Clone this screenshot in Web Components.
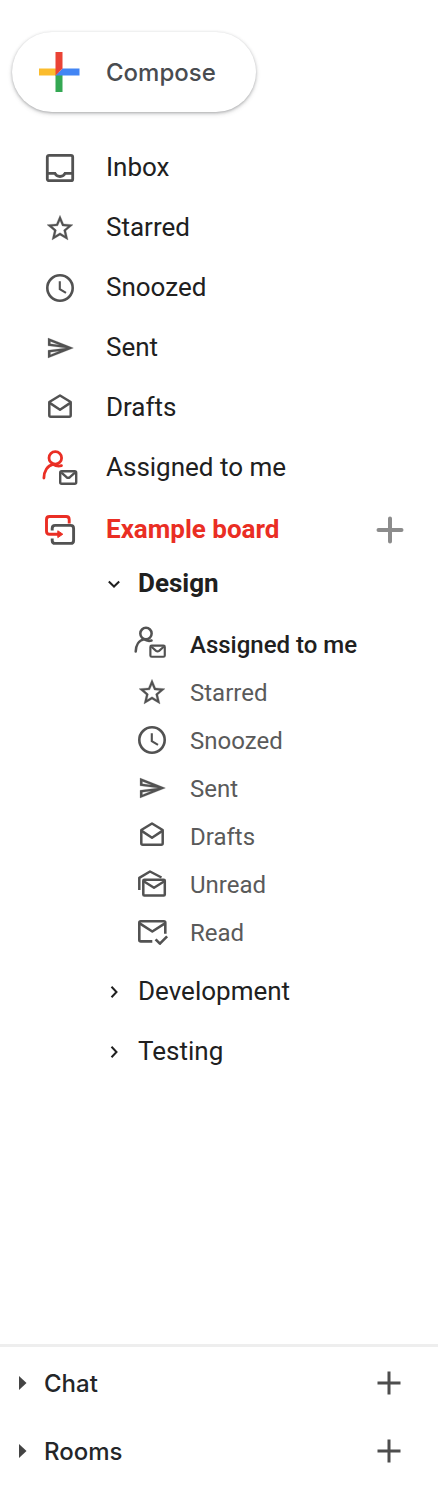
<!DOCTYPE html>
<html lang="en">
<head>
<meta charset="utf-8">
<meta name="viewport" content="width=device-width, initial-scale=1">
<title>Mail navigation</title>
<style>
  body {
    margin: 0;
    background: #fff;
    color: #202020;
    font-family: Roboto, "Liberation Sans", sans-serif;
    --accent: #ea2e24;
    --icon: #525252;
  }
</style>
</head>
<body>
<side-bar>
  <compose-button slot="compose">Compose</compose-button>

  <nav-item icon="inbox">Inbox</nav-item>
  <nav-item icon="star">Starred</nav-item>
  <nav-item icon="clock">Snoozed</nav-item>
  <nav-item icon="send">Sent</nav-item>
  <nav-item icon="drafts">Drafts</nav-item>
  <nav-item icon="assigned">Assigned to me</nav-item>
  <board-section name="Example board">
    <tree-node name="Design" open>
      <nav-item small current icon="assigned-small">Assigned to me</nav-item>
      <nav-item small icon="star">Starred</nav-item>
      <nav-item small icon="clock">Snoozed</nav-item>
      <nav-item small icon="send">Sent</nav-item>
      <nav-item small icon="drafts">Drafts</nav-item>
      <nav-item small icon="unread">Unread</nav-item>
      <nav-item small icon="read">Read</nav-item>
    </tree-node>
    <tree-node name="Development"></tree-node>
    <tree-node name="Testing"></tree-node>
  </board-section>

  <panel-row slot="footer" name="Chat"></panel-row>
  <panel-row slot="footer" name="Rooms"></panel-row>
</side-bar>

<script>
const person = (accent) => `
  <g fill="none" stroke-linecap="round" stroke-linejoin="round">
    <g stroke="${accent}" stroke-width="2.8">
      <circle cx="13.3" cy="7.900" r="6.3"/>
      <path d="M1.9 28C2 21 5.500 15.500 11 14.300c2.500 1.600 5.500 2.200 8.500 1.400"/>
    </g>
    <g stroke="var(--icon)" stroke-width="2.400">
      <rect x="18.200" y="21.300" width="16" height="12.400" rx="1.500"/>
      <path d="M20 23.200l4.500 4q1.700 1.200 3.400 0l4.500-4"/>
    </g>
  </g>`;

const ICONS = {
  inbox: `<g fill="none" stroke="var(--icon)" stroke-width="2.800">
      <rect x="5.300" y="5.300" width="25.400" height="25.400" rx="1.800"/>
      <path d="M5.300 23.300h7.600c.8 1.900 2.700 3.200 5.100 3.200s4.300-1.300 5.100-3.200h7.600"/></g>`,
  star: `<path fill="var(--icon)" stroke="var(--icon)" stroke-width=".2" transform="translate(2.400 2.700) scale(1.300)" d="M22 9.240l-7.190-.62L12 2 9.190 8.630 2 9.240l5.460 4.730L5.820 21 12 17.270 18.180 21l-1.630-7.030L22 9.240zM12 15.400l-3.760 2.270 1-4.280-3.320-2.880 4.380-.38L12 6.100l1.710 4.040 4.380.38-3.320 2.880 1 4.280L12 15.400z"/>`,
  clock: `<g fill="none" stroke="var(--icon)"><circle cx="18" cy="18" r="12.700" stroke-width="2.600"/>
      <path stroke-width="2.100" d="M17.800 11.300v7.900l6.200 3.700"/></g>`,
  send: `<path fill="var(--icon)" stroke="var(--icon)" stroke-width=".2" transform="translate(3.600 4.700) scale(1.210 1.110)" d="M4.010 6.030l7.510 3.220-7.520-1 .01-2.220m7.500 8.720L4 17.970v-2.220l7.510-1M2.010 3L2 10l15 2-15 2 .01 7L23 12 2.010 3z"/>`,
  drafts: `<g fill="none" stroke="var(--icon)" stroke-width="2.500" stroke-linejoin="round">
      <path d="M7.300 12L18 5.500 28.700 12v13.200q0 1.500-1.500 1.500H8.800q-1.500 0-1.500-1.500z"/>
      <path d="M7.300 12.600L18 19.700l10.700-7.100"/></g>`,
  assigned: person("var(--accent)"),
  "assigned-small": `<g transform="translate(0 .400) scale(.9)">${person("var(--icon)")}</g>`,
  unread: `<g fill="none" stroke="var(--icon)" stroke-width="2.500" stroke-linejoin="round">
      <path d="M5.300 24V11.800L16 5.500l11.500 6"/>
      <rect x="9.300" y="13.800" width="21.500" height="15.700" rx="1"/>
      <path d="M9.300 15l10.700 6.800L30.800 15"/></g>`,
  read: `<g fill="none" stroke="var(--icon)" stroke-width="2.600" stroke-linejoin="round">
      <path d="M18.300 27.400H6.800q-1.500 0-1.500-1.500V8.800q0-1.500 1.500-1.500h23q1.500 0 1.500 1.500v11"/>
      <path d="M5.300 9.200l13 8.300 13-8.300M21.600 25.300l4.300 4.400 7.200-7.300"/></g>`,
  board: `<g fill="none" stroke-width="2.900">
      <path stroke="var(--icon)" d="M10.200 18.500V16.400q0-3 3-3h15.400q3 0 3 3v12q0 3-3 3H13.200q-3 0-3-3v-1.800"/>
      <path stroke="var(--accent)" d="M27.200 11.500V7.500q0-3-3-3H7.500q-3 0-3 3v11.700q0 3 3 3H17"/></g>
      <path fill="var(--accent)" stroke="var(--accent)" stroke-linejoin="round" d="M15.800 18.800l5 3.400-5 3.400z"/>`
};
const svg = (name) => `<svg width="36" height="36" viewBox="0 0 36 36" aria-hidden="true">${ICONS[name]}</svg>`;

class Base extends HTMLElement {
  connectedCallback() {
    if (this.shadowRoot) return;
    this.attachShadow({ mode: "open" }).innerHTML = this.template();
    this.ready();
  }
  ready() {}
}

const BUTTON = `button { border: 0; padding: 0; margin: 0; background: none; color: inherit; font: inherit; cursor: pointer; }
  svg { display: block; flex: none; }`;

customElements.define("side-bar", class extends Base {
  template() {
    return `<style>
      :host { display: flex; flex-direction: column; min-height: 100vh; }
      header { padding: 32px 12px 26px; }
      nav { flex: 1; }
      footer { border-top: 3px solid #eee; padding: 2px 0 3px; }
    </style>
    <header><slot name="compose"></slot></header>
    <nav aria-label="Mailboxes"><slot></slot></nav>
    <footer><slot name="footer"></slot></footer>`;
  }
});

customElements.define("compose-button", class extends Base {
  template() {
    return `<style>${BUTTON}
      :host { display: flex; }
      button { display: flex; align-items: center; gap: 26px; height: 80px; padding: 0 40px 0 26px; border-radius: 40px;
        background: #fff; color: #494c50; font: 500 24px/32px Inter, Roboto, sans-serif;
        box-shadow: 0 1px 3px rgba(60,64,67,.35), 0 2px 5px rgba(60,64,67,.16); }
      span { padding-top: 2px; }
    </style>
    <button type="button">
      <svg width="42" height="42" viewBox="0 0 42 42" aria-hidden="true">
        <path fill="#fbbc2d" d="M1 17.500h17v7H1z"/>
        <path fill="#34a853" d="M17.500 24.500l3.500-3.500h3.500v20h-7z"/>
        <path fill="#4285f4" d="M24.500 17.500H41.500v7H17.500z"/>
        <path fill="#ea4335" d="M17.500 1h7v16.500l-7 7z"/>
      </svg>
      <span><slot></slot></span>
    </button>`;
  }
});

customElements.define("nav-item", class extends Base {
  template() {
    return `<style>
      :host { display: block; }
      a { display: flex; align-items: center; gap: 28px; height: 60px; padding-left: 42px;
        color: inherit; text-decoration: none; font-size: 26px; line-height: 32px; }
      span { padding-bottom: 2px; white-space: nowrap; }
      svg { flex: none; }
      :host([small]) a { height: 48px; gap: 20px; padding-left: 134px; font-size: 24px; color: #5a5a5a; }
      :host([small]) span { padding: 2px 0 0; }
      :host([current]) a { color: #202020; font-weight: 500; }
    </style>
    <a href="#"${this.hasAttribute("current") ? ' aria-current="page"' : ""}>${svg(this.getAttribute("icon"))}<span><slot></slot></span></a>`;
  }
});

customElements.define("board-section", class extends Base {
  template() {
    const name = this.getAttribute("name");
    return `<style>${BUTTON}
      :host { display: block; }
      .head { display: flex; align-items: center; height: 64px; padding: 0 24px 0 42px; }
      a { display: flex; align-items: center; gap: 28px; flex: 1; color: var(--accent); text-decoration: none;
        font-weight: 700; font-size: 26px; line-height: 32px; white-space: nowrap; }
      span { padding-bottom: 2px; }
    </style>
    <div class="head">
      <a href="#">${svg("board")}<span>${name}</span></a>
      <button type="button" aria-label="Add to ${name}">
        <svg width="48" height="48" viewBox="0 0 48 48" aria-hidden="true"><path stroke="#8c8c8c" stroke-width="4" stroke-linecap="round" d="M24 12.500v23M12.500 24h23"/></svg>
      </button>
    </div>
    <slot></slot>`;
  }
});

customElements.define("tree-node", class extends Base {
  template() {
    return `<style>${BUTTON}
      :host { display: block; }
      button { display: flex; align-items: center; gap: 16px; width: 100%; height: 60px; padding-left: 106px;
        font-size: 26px; line-height: 32px; text-align: left; }
      span { padding-bottom: 2px; }
      .items { display: none; padding: 14px 0 6px; }
      :host([open]) button { height: 44px; font-weight: 700; }
      :host([open]) .items { display: block; }
      :host([open]) svg { transform: rotate(90deg); }
    </style>
    <button type="button" aria-expanded="${this.hasAttribute("open")}">
      <svg width="16" height="16" viewBox="0 0 16 16" aria-hidden="true"><path fill="none" stroke="#202020" stroke-width="2" d="M5.500 2.800L10.500 8l-5 5.200"/></svg>
      <span>${this.getAttribute("name")}</span>
    </button>
    <div class="items"><slot></slot></div>`;
  }
  ready() {
    const button = this.shadowRoot.querySelector("button");
    button.addEventListener("click", () =>
      button.setAttribute("aria-expanded", this.toggleAttribute("open")));
  }
});

customElements.define("panel-row", class extends Base {
  template() {
    const name = this.getAttribute("name");
    return `<style>${BUTTON}
      :host { display: flex; align-items: center; height: 68px; padding: 0 24px 0 16px; }
      .toggle { display: flex; align-items: center; gap: 16px; flex: 1; color: #242629; text-align: left;
        font: 500 24px/32px Inter, Roboto, sans-serif; }
      span { padding-top: 2px; }
    </style>
    <button type="button" class="toggle" aria-expanded="false">
      <svg width="12" height="16" viewBox="0 0 12 16" aria-hidden="true"><path fill="#444" d="M3 1l7.500 7L3 15z"/></svg>
      <span>${name}</span>
    </button>
    <button type="button" aria-label="New in ${name}">
      <svg width="48" height="48" viewBox="0 0 48 48" aria-hidden="true"><path stroke="#4d4d4d" stroke-width="3" d="M23 12.500v23M11.500 24h23"/></svg>
    </button>`;
  }
});
</script>
</body>
</html>
